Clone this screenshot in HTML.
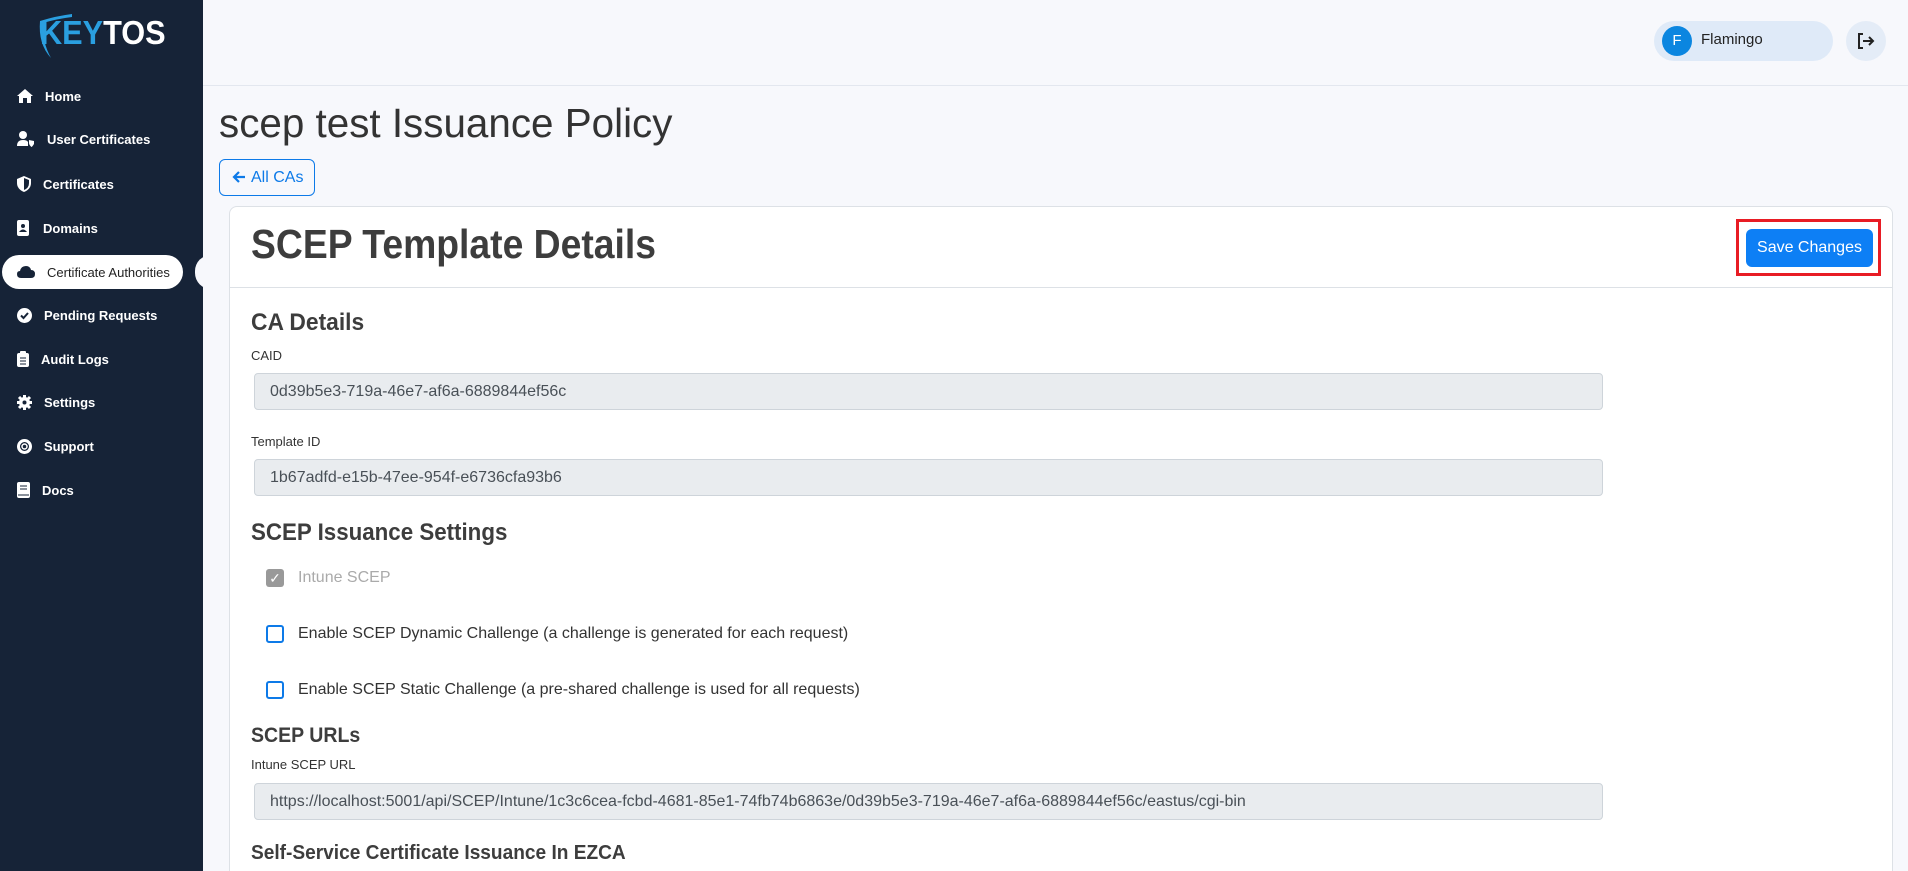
<!DOCTYPE html>
<html><head><meta charset="utf-8"><style>
*{box-sizing:border-box;margin:0;padding:0}
html,body{width:1908px;height:871px;overflow:hidden}
body{background:#f7f8fc;font-family:"Liberation Sans",Arial,sans-serif;color:#333}
#w{position:relative;width:1908px;height:871px;overflow:hidden}
.sb{position:absolute;left:0;top:0;width:203px;height:871px;background:#162337}
.logo{position:absolute;left:40px;top:14px;font-size:33px;font-weight:bold;transform:scaleX(0.93);transform-origin:left}
.nav{position:absolute;left:17px;color:#fff;font-size:13px;font-weight:bold;display:flex;align-items:center;height:20px}
.nav svg{margin-right:12px;flex:none}
.pill{position:absolute;left:2px;top:255px;width:181px;height:34px;background:#fff;border-radius:17px}
.abs{position:absolute}
.inp{position:absolute;height:37px;background:#e9ecef;border:1px solid #ced4da;border-radius:4px;font-size:16px;color:#495057;padding-left:15px;line-height:35px}
.lbl{position:absolute;font-size:13px;color:#333}
.h{position:absolute;color:#3d3d3d;white-space:nowrap;transform-origin:left}
.cb{position:absolute;width:18px;height:18px;border:2px solid #0d7ae8;border-radius:3px;left:266px}
.ct{position:absolute;left:298px;font-size:16px;color:#333}
</style></head><body><div id="w">
<div class="sb">
 <svg class="abs" style="left:36px;top:12px" width="40" height="48" viewBox="0 0 40 48"><path d="M4 9 Q20 4 36 2 L36 5 Q20 7 7 11 Q6 30 15 46 Q2 32 4 9Z" fill="#2a9fe0"/></svg>
 <div class="logo"><span style="color:#2a9fe0">KEY</span><span style="color:#fff">TOS</span></div>
 <div class="nav" style="top:86px"><svg width="16" height="14" viewBox="0 0 16 14"><path d="M8 0 L16 7 H14 V14 H10 V9 H6 V14 H2 V7 H0Z" fill="#fff"/></svg>Home</div>
 <div class="nav" style="top:129px"><svg width="18" height="16" viewBox="0 0 18 16"><circle cx="6" cy="4" r="4" fill="#fff"/><path d="M0 15 Q0 9 6 9 Q10 9 11 11 V15Z" fill="#fff"/><path d="M12 9 L17 10 V13 Q15 16 14.5 16 Q12 14 12 12Z" fill="#fff"/></svg>User Certificates</div>
 <div class="nav" style="top:174px"><svg width="14" height="16" viewBox="0 0 14 16"><path d="M7 0 L14 3 V7 Q14 13 7 16 Q0 13 0 7 V3Z" fill="#fff"/><path d="M7 2 L12 4 V7 Q12 12 7 14Z" fill="#162337"/></svg>Certificates</div>
 <div class="nav" style="top:218px"><svg width="14" height="16" viewBox="0 0 14 16"><rect x="0" y="0" width="12" height="16" rx="2" fill="#fff"/><circle cx="6" cy="6" r="2" fill="#162337"/><path d="M2 12 Q6 7 10 12Z" fill="#162337"/></svg>Domains</div>
 <div class="pill"></div>
 <div class="nav" style="top:262px;color:#222;font-weight:normal;left:17px"><svg width="18" height="12" viewBox="0 0 18 12"><path d="M4 12 Q0 12 0 8 Q0 5 3 5 Q4 0 9 0 Q13 0 14 4 Q18 4 18 8 Q18 12 14 12Z" fill="#162337"/></svg>Certificate Authorities</div>
 <div class="nav" style="top:305px"><svg width="15" height="15" viewBox="0 0 15 15"><circle cx="7.5" cy="7.5" r="7.5" fill="#fff"/><path d="M4 7.5 L6.5 10 L11 5" stroke="#162337" stroke-width="2" fill="none"/></svg>Pending Requests</div>
 <div class="nav" style="top:349px"><svg width="12" height="16" viewBox="0 0 12 16"><rect y="2" width="12" height="14" rx="2" fill="#fff"/><rect x="3" y="0" width="6" height="4" rx="1" fill="#fff"/><path d="M3 7 H9 M3 10 H9 M3 13 H9" stroke="#162337"/></svg>Audit Logs</div>
 <div class="nav" style="top:392px"><svg width="15" height="15" viewBox="0 0 15 15"><circle cx="7.5" cy="7.5" r="5.5" fill="#fff"/><path d="M7.5 0 V15 M0 7.5 H15 M2 2 L13 13 M13 2 L2 13" stroke="#fff" stroke-width="3"/><circle cx="7.5" cy="7.5" r="2" fill="#162337"/></svg>Settings</div>
 <div class="nav" style="top:436px"><svg width="15" height="15" viewBox="0 0 15 15"><circle cx="7.5" cy="7.5" r="6" stroke="#fff" stroke-width="3" fill="none"/><circle cx="7.5" cy="7.5" r="2.5" stroke="#fff" stroke-width="1.5" fill="none"/></svg>Support</div>
 <div class="nav" style="top:480px"><svg width="13" height="16" viewBox="0 0 13 16"><rect width="13" height="16" rx="2" fill="#fff"/><path d="M3 4 H10 M3 7 H10 M1 13 H12" stroke="#162337"/></svg>Docs</div>
</div>
<div class="abs" style="left:195px;top:255px;width:16px;height:34px;background:#f7f8fc;border-radius:17px 0 0 17px"></div>
<div class="abs" style="left:203px;top:85px;width:1705px;height:1px;background:#e3e7ef"></div>
<div class="abs" style="left:1654px;top:21px;width:179px;height:40px;background:#dfeaf8;border-radius:20px"></div>
<div class="abs" style="left:1662px;top:26px;width:30px;height:30px;background:#0b86e0;border-radius:50%;color:#fff;font-size:15px;text-align:center;line-height:30px">F</div>
<div class="abs" style="left:1701px;top:31px;font-size:15px;color:#222">Flamingo</div>
<div class="abs" style="left:1846px;top:21px;width:40px;height:40px;background:#e4ecf7;border-radius:50%"></div>
<svg class="abs" style="left:1858px;top:33px" width="17" height="16" viewBox="0 0 17 16"><path d="M5 1 H1 V15 H5" stroke="#222" stroke-width="2" fill="none"/><path d="M5 8 H15 M11 4 L15 8 L11 12" stroke="#222" stroke-width="2" fill="none"/></svg>
<div class="h" style="left:219px;top:100px;font-size:41px;transform:scaleX(0.985);color:#333">scep test Issuance Policy</div>
<div class="abs" style="left:219px;top:159px;width:96px;height:37px;border:1px solid #0d7ae8;border-radius:6px;color:#0d7ae8;font-size:16px;line-height:35px;padding-left:31px">All CAs</div>
<svg class="abs" style="left:232px;top:170px" width="14" height="14" viewBox="0 0 14 14"><path d="M13 7 H2 M7 2 L2 7 L7 12" stroke="#0d7ae8" stroke-width="2.2" fill="none"/></svg>
<div class="abs" style="left:229px;top:206px;width:1664px;height:700px;background:#fff;border:1px solid #dde1e6;border-radius:8px"></div>
<div class="abs" style="left:230px;top:287px;width:1662px;height:1px;background:#dde1e6"></div>
<div class="h" style="left:251px;top:221px;font-size:41px;font-weight:bold;transform:scaleX(0.91)">SCEP Template Details</div>
<div class="abs" style="left:1736px;top:219px;width:145px;height:57px;border:3px solid #e81c24"></div>
<div class="abs" style="left:1746px;top:229px;width:127px;height:38px;background:#0d7ff5;border-radius:6px;color:#fff;font-size:16px;text-align:center;line-height:38px">Save Changes</div>
<div class="h" style="left:251px;top:309px;font-size:24px;font-weight:bold;transform:scaleX(0.95)">CA Details</div>
<div class="lbl" style="left:251px;top:348px">CAID</div>
<div class="inp" style="left:254px;top:373px;width:1349px">0d39b5e3-719a-46e7-af6a-6889844ef56c</div>
<div class="lbl" style="left:251px;top:434px">Template ID</div>
<div class="inp" style="left:254px;top:459px;width:1349px">1b67adfd-e15b-47ee-954f-e6736cfa93b6</div>
<div class="h" style="left:251px;top:519px;font-size:24px;font-weight:bold;transform:scaleX(0.93)">SCEP Issuance Settings</div>
<div class="abs" style="left:266px;top:569px;width:18px;height:18px;background:#999;border-radius:3px;color:#fff;font-size:14px;text-align:center;line-height:18px">✓</div>
<div class="ct" style="top:569px;color:#aaa">Intune SCEP</div>
<div class="cb" style="top:625px"></div>
<div class="ct" style="top:625px">Enable SCEP Dynamic Challenge (a challenge is generated for each request)</div>
<div class="cb" style="top:681px"></div>
<div class="ct" style="top:681px">Enable SCEP Static Challenge (a pre-shared challenge is used for all requests)</div>
<div class="h" style="left:251px;top:724px;font-size:21px;font-weight:bold;transform:scaleX(0.93)">SCEP URLs</div>
<div class="lbl" style="left:251px;top:757px">Intune SCEP URL</div>
<div class="inp" style="left:254px;top:783px;width:1349px">https://localhost:5001/api/SCEP/Intune/1c3c6cea-fcbd-4681-85e1-74fb74b6863e/0d39b5e3-719a-46e7-af6a-6889844ef56c/eastus/cgi-bin</div>
<div class="h" style="left:251px;top:842px;font-size:20px;font-weight:bold;transform:scaleX(0.955)">Self-Service Certificate Issuance In EZCA</div>
</div></body></html>
